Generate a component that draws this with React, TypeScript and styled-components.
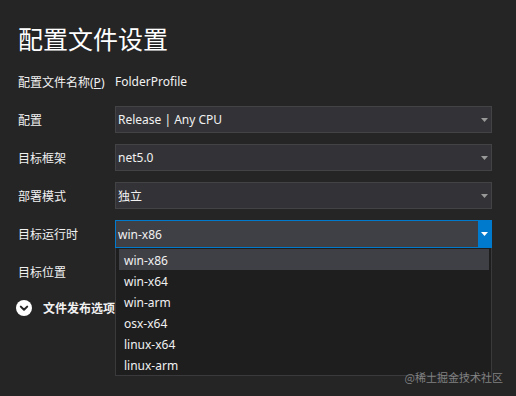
import React, {FC} from 'react';
import styled, {createGlobalStyle} from "styled-components";

const GlobalStyle = createGlobalStyle`
  html, body {
    margin: 0;
    padding: 0;
    background: #252526;
  }
  body {
    font-family: "Noto Sans", "Noto Sans CJK SC", sans-serif;
    color: #f1f1f1;
  }
`

const Page = styled.div`
  position: relative;
  width: 516px;
  height: 396px;
  box-sizing: border-box;
  padding: 18px 24px 0 18px;
  background: #252526;
  overflow: hidden;
`

const Title = styled.h1`
  margin: 0;
  font-size: 25px;
  font-weight: 400;
  line-height: 40px;
  color: #ffffff;
  font-family: "Noto Sans CJK SC", sans-serif;
`

const Form = styled.div`
  display: flex;
  flex-direction: column;
  gap: 11px;
  margin-top: 10px;
`

const Row = styled.div`
  display: grid;
  grid-template-columns: 97px 1fr;
  align-items: center;
  height: 27px;
  position: relative;
`

const Label = styled.div`
  font-size: 12px;
  font-family: "Noto Sans", "Noto Sans CJK SC", sans-serif;
  color: #f1f1f1;
`

const Value = styled.div`
  font-size: 12px;
  color: #f1f1f1;
`

const Select = styled.div<{ $active?: boolean }>`
  display: flex;
  align-items: center;
  height: ${p => p.$active ? "28px" : "27px"};
  box-sizing: border-box;
  border: 1px solid ${p => p.$active ? "#007acc" : "#434346"};
  background: ${p => p.$active ? "#3f3f46" : "#333337"};
  font-size: 12px;
  color: #f1f1f1;
  padding-left: 2px;
`

const SelectText = styled.span`
  flex: 1;
  white-space: nowrap;
`

const Arrow = styled.div<{ $active?: boolean }>`
  display: flex;
  align-items: center;
  justify-content: center;
  width: 13px;
  align-self: stretch;
  background: ${p => p.$active ? "#007acc" : "transparent"};
  color: ${p => p.$active ? "#ffffff" : "#999999"};
`

const Menu = styled.div`
  position: absolute;
  left: 97px;
  right: 0;
  top: 28px;
  height: 128px;
  box-sizing: border-box;
  background: #1e1e1f;
  border: 1px solid #3a3a3d;
  border-top: none;
  padding: 1px 2px 0 3px;
  z-index: 2;
`

const MenuItem = styled.div<{ $selected?: boolean }>`
  height: 21px;
  line-height: 23px;
  padding-left: 5px;
  font-size: 12px;
  color: #f1f1f1;
  background: ${p => p.$selected ? "#3f3f46" : "transparent"};
`

const Section = styled.div`
  display: flex;
  align-items: center;
  gap: 11px;
  height: 27px;
  margin-top: -2px;
  margin-left: -2px;
  font-family: "Noto Sans CJK SC", sans-serif;
  font-size: 12px;
  font-weight: 700;
  color: #f1f1f1;
`

const Watermark = styled.div`
  position: absolute;
  right: 13px;
  bottom: 11px;
  font-family: "Noto Sans CJK SC", sans-serif;
  font-size: 11px;
  color: rgba(160, 160, 160, 0.75);
  z-index: 3;
`

const Caret: FC = () => (
    <svg width="7" height="4" viewBox="0 0 7 4">
        <path d="M0 0 H7 L3.5 4 Z" fill="currentColor"/>
    </svg>
)

const ExpandIcon: FC = () => (
    <svg width="16" height="16" viewBox="0 0 16 16">
        <circle cx="8" cy="8" r="8" fill="#ffffff"/>
        <path d="M4.8 6.6 L8 9.8 L11.2 6.6" fill="none" stroke="#252526" strokeWidth="2" strokeLinecap="round"
              strokeLinejoin="round"/>
    </svg>
)

const fields = [
    {label: "配置", value: "Release | Any CPU"},
    {label: "目标框架", value: "net5.0"},
    {label: "部署模式", value: "独立"},
]

const runtimes = ["win-x86", "win-x64", "win-arm", "osx-x64", "linux-x64", "linux-arm"]

const App: FC = () => {
    return (
        <Page>
            <GlobalStyle/>
            <Title>配置文件设置</Title>
            <Form>
                <Row>
                    <Label>配置文件名称(<u>P</u>)</Label>
                    <Value>FolderProfile</Value>
                </Row>
                {fields.map(f => (
                    <Row key={f.label}>
                        <Label>{f.label}</Label>
                        <Select>
                            <SelectText>{f.value}</SelectText>
                            <Arrow><Caret/></Arrow>
                        </Select>
                    </Row>
                ))}
                <Row>
                    <Label>目标运行时</Label>
                    <Select $active>
                        <SelectText>win-x86</SelectText>
                        <Arrow $active><Caret/></Arrow>
                    </Select>
                    <Menu>
                        {runtimes.map((r, i) => (
                            <MenuItem key={r} $selected={i === 0}>{r}</MenuItem>
                        ))}
                    </Menu>
                </Row>
                <Row>
                    <Label>目标位置</Label>
                </Row>
                <Section>
                    <ExpandIcon/>
                    文件发布选项
                </Section>
            </Form>
            <Watermark>@稀土掘金技术社区</Watermark>
        </Page>
    );
};

export default App;
